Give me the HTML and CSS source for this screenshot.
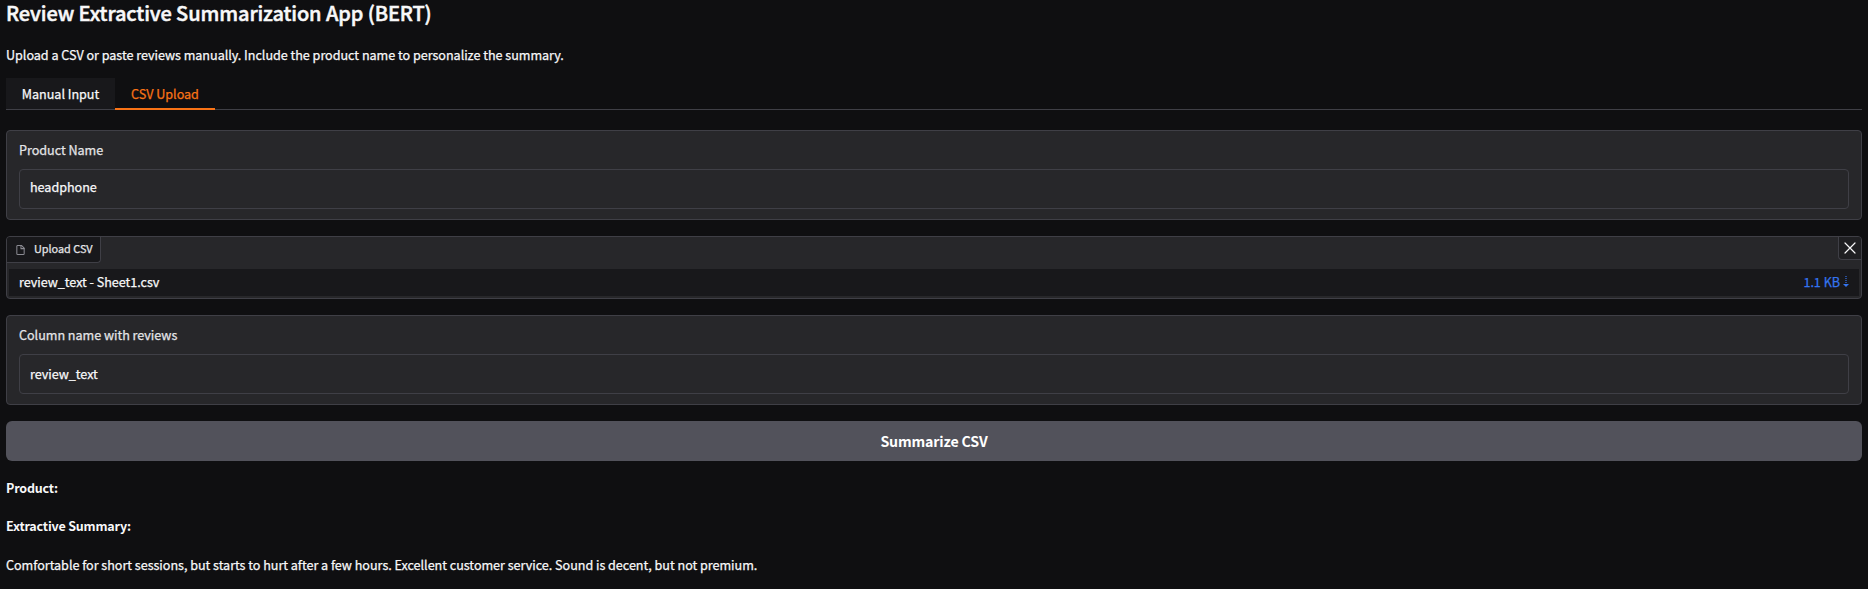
FILE: index.html
```html
<!DOCTYPE html>
<html lang="en">
<head>
<meta charset="utf-8">
<title>Review Extractive Summarization App (BERT)</title>
<link rel="stylesheet" href="styles.css">
</head>
<body>
<main class="app">
  <h1 class="title"><span>Review Extractive Summarization App (BERT)</span></h1>
  <p class="intro"><span>Upload a CSV or paste reviews manually. Include the product name to personalize the summary.</span></p>
  <nav class="tabs">
    <button class="tab tab-manual"><span>Manual Input</span></button>
    <button class="tab tab-csv selected"><span>CSV Upload</span></button>
  </nav>
  <section class="block field">
    <label class="label product-label">Product Name</label>
    <div class="input product-input">headphone</div>
  </section>
  <section class="block upload">
    <div class="upload-head">
      <div class="tag">
        <svg class="file-icon" viewBox="0 0 24 24" fill="none" stroke="currentColor" stroke-width="2.2" stroke-linecap="round" stroke-linejoin="round"><path d="M14 2H6a2 2 0 0 0-2 2v16a2 2 0 0 0 2 2h12a2 2 0 0 0 2-2V8z"/><path d="M13 2v7h7"/></svg>
        <span>Upload CSV</span>
      </div>
      <button class="close" aria-label="Clear"><svg viewBox="0 0 12 12" fill="none" stroke="currentColor" stroke-width="1.2" stroke-linecap="round"><path d="M1 1l10 10M11 1L1 11"/></svg></button>
    </div>
    <div class="file-row">
      <span class="file-name">review_text - Sheet1.csv</span>
      <a class="size"><span>1.1 KB</span><svg class="down" viewBox="0 0 6 12" fill="none" stroke="currentColor"><path d="M3 0v8" stroke-width="1.2" stroke-dasharray="1 1"/><path d="M0 8h6L3 11z" fill="currentColor" stroke="none"/></svg></a>
    </div>
  </section>
  <section class="block field">
    <label class="label column-label">Column name with reviews</label>
    <div class="input column-input">review_text</div>
  </section>
  <button class="submit"><span>Summarize CSV</span></button>
  <div class="result">
    <p><strong>Product:</strong></p>
    <p><strong>Extractive Summary:</strong></p>
    <p class="r-text">Comfortable for short sessions, but starts to hurt after a few hours. Excellent customer service. Sound is decent, but not premium.</p>
  </div>
</main>
</body>
</html>
```
FILE: styles.css
```css
* { box-sizing: border-box; margin: 0; }
body {
  background: #0f0f11;
  color: #f8f8f9;
  font: 12.6px/20px "Noto Sans CJK SC", "Noto Sans", sans-serif;
  letter-spacing: -0.027px;
  -webkit-text-stroke: 0.25px currentColor;
  overflow: hidden;
  white-space: nowrap;
}
button { font: inherit; letter-spacing: inherit; color: inherit; border: 0; background: none; padding: 0; }
.app { padding: 0 6px; display: flex; flex-direction: column; }
.title { font-size: 20px; line-height: 26px; font-weight: 500; height: 45px; letter-spacing: -0.1px; -webkit-text-stroke-width: 0.5px; }
.intro { height: 33px; }
.tabs { display: flex; height: 32px; margin-bottom: 20px; background: linear-gradient(#3f3f46, #3f3f46) bottom 0 left 0 / 100% 1px no-repeat; }
.tab { height: 32px; padding-top: 1px; }
.tab-manual { width: 109px; height: 31px; background: #18181b; }
.tab-csv { width: 100px; color: #f97316; border-bottom: 2px solid #f97316; padding: 2px 0 0; }
.block { border: 1px solid #3f3f46; border-radius: 4px; background: #27272a; margin-bottom: 16px; }
.field { height: 90px; padding: 9px 12px; }
.label { display: block; height: 29px; color: #e4e4e7; }
.input { height: 40px; border: 1px solid #3f3f46; border-radius: 4px; padding: 9px 10px; }
.product-input { padding-top: 7px; }
.upload { height: 63px; padding-bottom: 2px; overflow: hidden; }
.upload-head { display: flex; justify-content: space-between; height: 32px; }
.tag { display: flex; align-items: center; gap: 8px; width: 94px; height: 26px; padding-left: 8px; background: #18181b; border: solid #3f3f46; border-width: 0 1px 1px 0; border-radius: 0 0 4px 0; font-size: 10.9px; color: #e4e4e7; }
.tag span { padding-bottom: 4px; }
.file-icon { width: 11px; height: 12px; color: #8b8b93; }
.close { display: grid; place-items: center; width: 23px; height: 23px; border: solid #3f3f46; border-width: 0 0 1px 1px; border-radius: 0 0 0 4px; background: #1f1f22; }
.close svg { width: 12px; height: 12px; }
.file-row { display: flex; justify-content: space-between; align-items: center; height: 27px; margin: 0 2px; padding: 0 10px 2px; background: #18181b; }
.size { display: flex; align-items: center; gap: 3px; color: #3474f0; }
.down { width: 6px; height: 12px; }
.submit { height: 40px; border-radius: 6px; background: #52525b; font-size: 14.2px; font-weight: 700; letter-spacing: -0.15px; -webkit-text-stroke-width: 0; color: #fff; margin-bottom: 17px; }
.result p { height: 38.5px; }
.result p:nth-child(2) { height: 39.5px; margin-top: -1px; }
.result strong { font-weight: 700; font-size: 12.5px; letter-spacing: -0.18px; -webkit-text-stroke-width: 0; }
```
